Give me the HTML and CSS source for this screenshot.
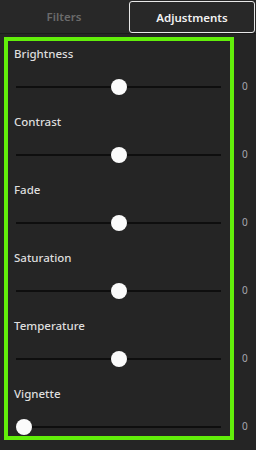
FILE: index.html
```html
<!DOCTYPE html>
<html lang="en">
<head>
    <meta charset="UTF-8">
    <meta name="viewport" content="width=device-width, initial-scale=1.0">
    <title>Adjustments</title>
    <link rel="stylesheet" href="styles.css">
</head>
<body>
    <div class="tabs">
        <div class="tab">Filters</div>
        <div class="tab active">Adjustments</div>
    </div>

    <div class="panel">
        <div class="row">
            <div class="label">Brightness</div>
            <div class="slider">
                <input type="range" min="-100" max="100" value="0">
                <span class="value">0</span>
            </div>
        </div>
        <div class="row">
            <div class="label">Contrast</div>
            <div class="slider">
                <input type="range" min="-100" max="100" value="0">
                <span class="value">0</span>
            </div>
        </div>
        <div class="row">
            <div class="label">Fade</div>
            <div class="slider">
                <input type="range" min="-100" max="100" value="0">
                <span class="value">0</span>
            </div>
        </div>
        <div class="row">
            <div class="label">Saturation</div>
            <div class="slider">
                <input type="range" min="-100" max="100" value="0">
                <span class="value">0</span>
            </div>
        </div>
        <div class="row">
            <div class="label">Temperature</div>
            <div class="slider">
                <input type="range" min="-100" max="100" value="0">
                <span class="value">0</span>
            </div>
        </div>
        <div class="row">
            <div class="label">Vignette</div>
            <div class="slider">
                <input type="range" min="0" max="100" value="0">
                <span class="value">0</span>
            </div>
        </div>
    </div>
</body>
</html>
```

FILE: styles.css
```css
body {
    margin: 0;
    background: #252525;
    font-family: "Noto Sans", "Open Sans", sans-serif;
    color: #dedede;
}
.tabs {
    display: grid;
    grid-template-columns: 128px 1fr;
    height: 34px;
    background: #282828;
    border-bottom: 1px solid #1b1b1b;
    box-sizing: border-box;
}
.tab {
    display: flex;
    align-items: center;
    justify-content: center;
    font-size: 11.5px;
    font-weight: 600;
    color: #6b6b6b;
}
.tab.active {
    margin: 1px 1px 0 1px;
    border: 1px solid #e8e8e8;
    border-radius: 3px;
    color: #f2f2f2;
}
.panel {
    width: 216px;
    margin: 3px 0 0 4px;
    padding: 5px 0 0 6px;
    border: 4px solid #62ee0a;
    display: flex;
    flex-direction: column;
    gap: 18px;
}
.row {
    height: 50px;
}
.label {
    font-size: 11.5px;
    font-weight: 500;
    line-height: 16px;
    height: 16px;
}
.slider {
    display: flex;
    align-items: center;
    height: 18px;
    margin-top: 16px;
}
.value {
    flex: none;
    margin: -2px 0 0 21px;
    font-size: 10px;
    color: #a8a8b0;
}
input[type="range"] {
    -webkit-appearance: none;
    appearance: none;
    flex: none;
    width: 205px;
    height: 18px;
    margin: 0 0 0 2px;
    padding: 0;
    background: transparent;
}
input[type="range"]::-webkit-slider-runnable-track {
    height: 2px;
    background: #0e0e0e;
}
input[type="range"]::-webkit-slider-thumb {
    -webkit-appearance: none;
    width: 16px;
    height: 16px;
    margin-top: -7px;
    border-radius: 50%;
    background: #fbfbfb;
    border: none;
}
```
